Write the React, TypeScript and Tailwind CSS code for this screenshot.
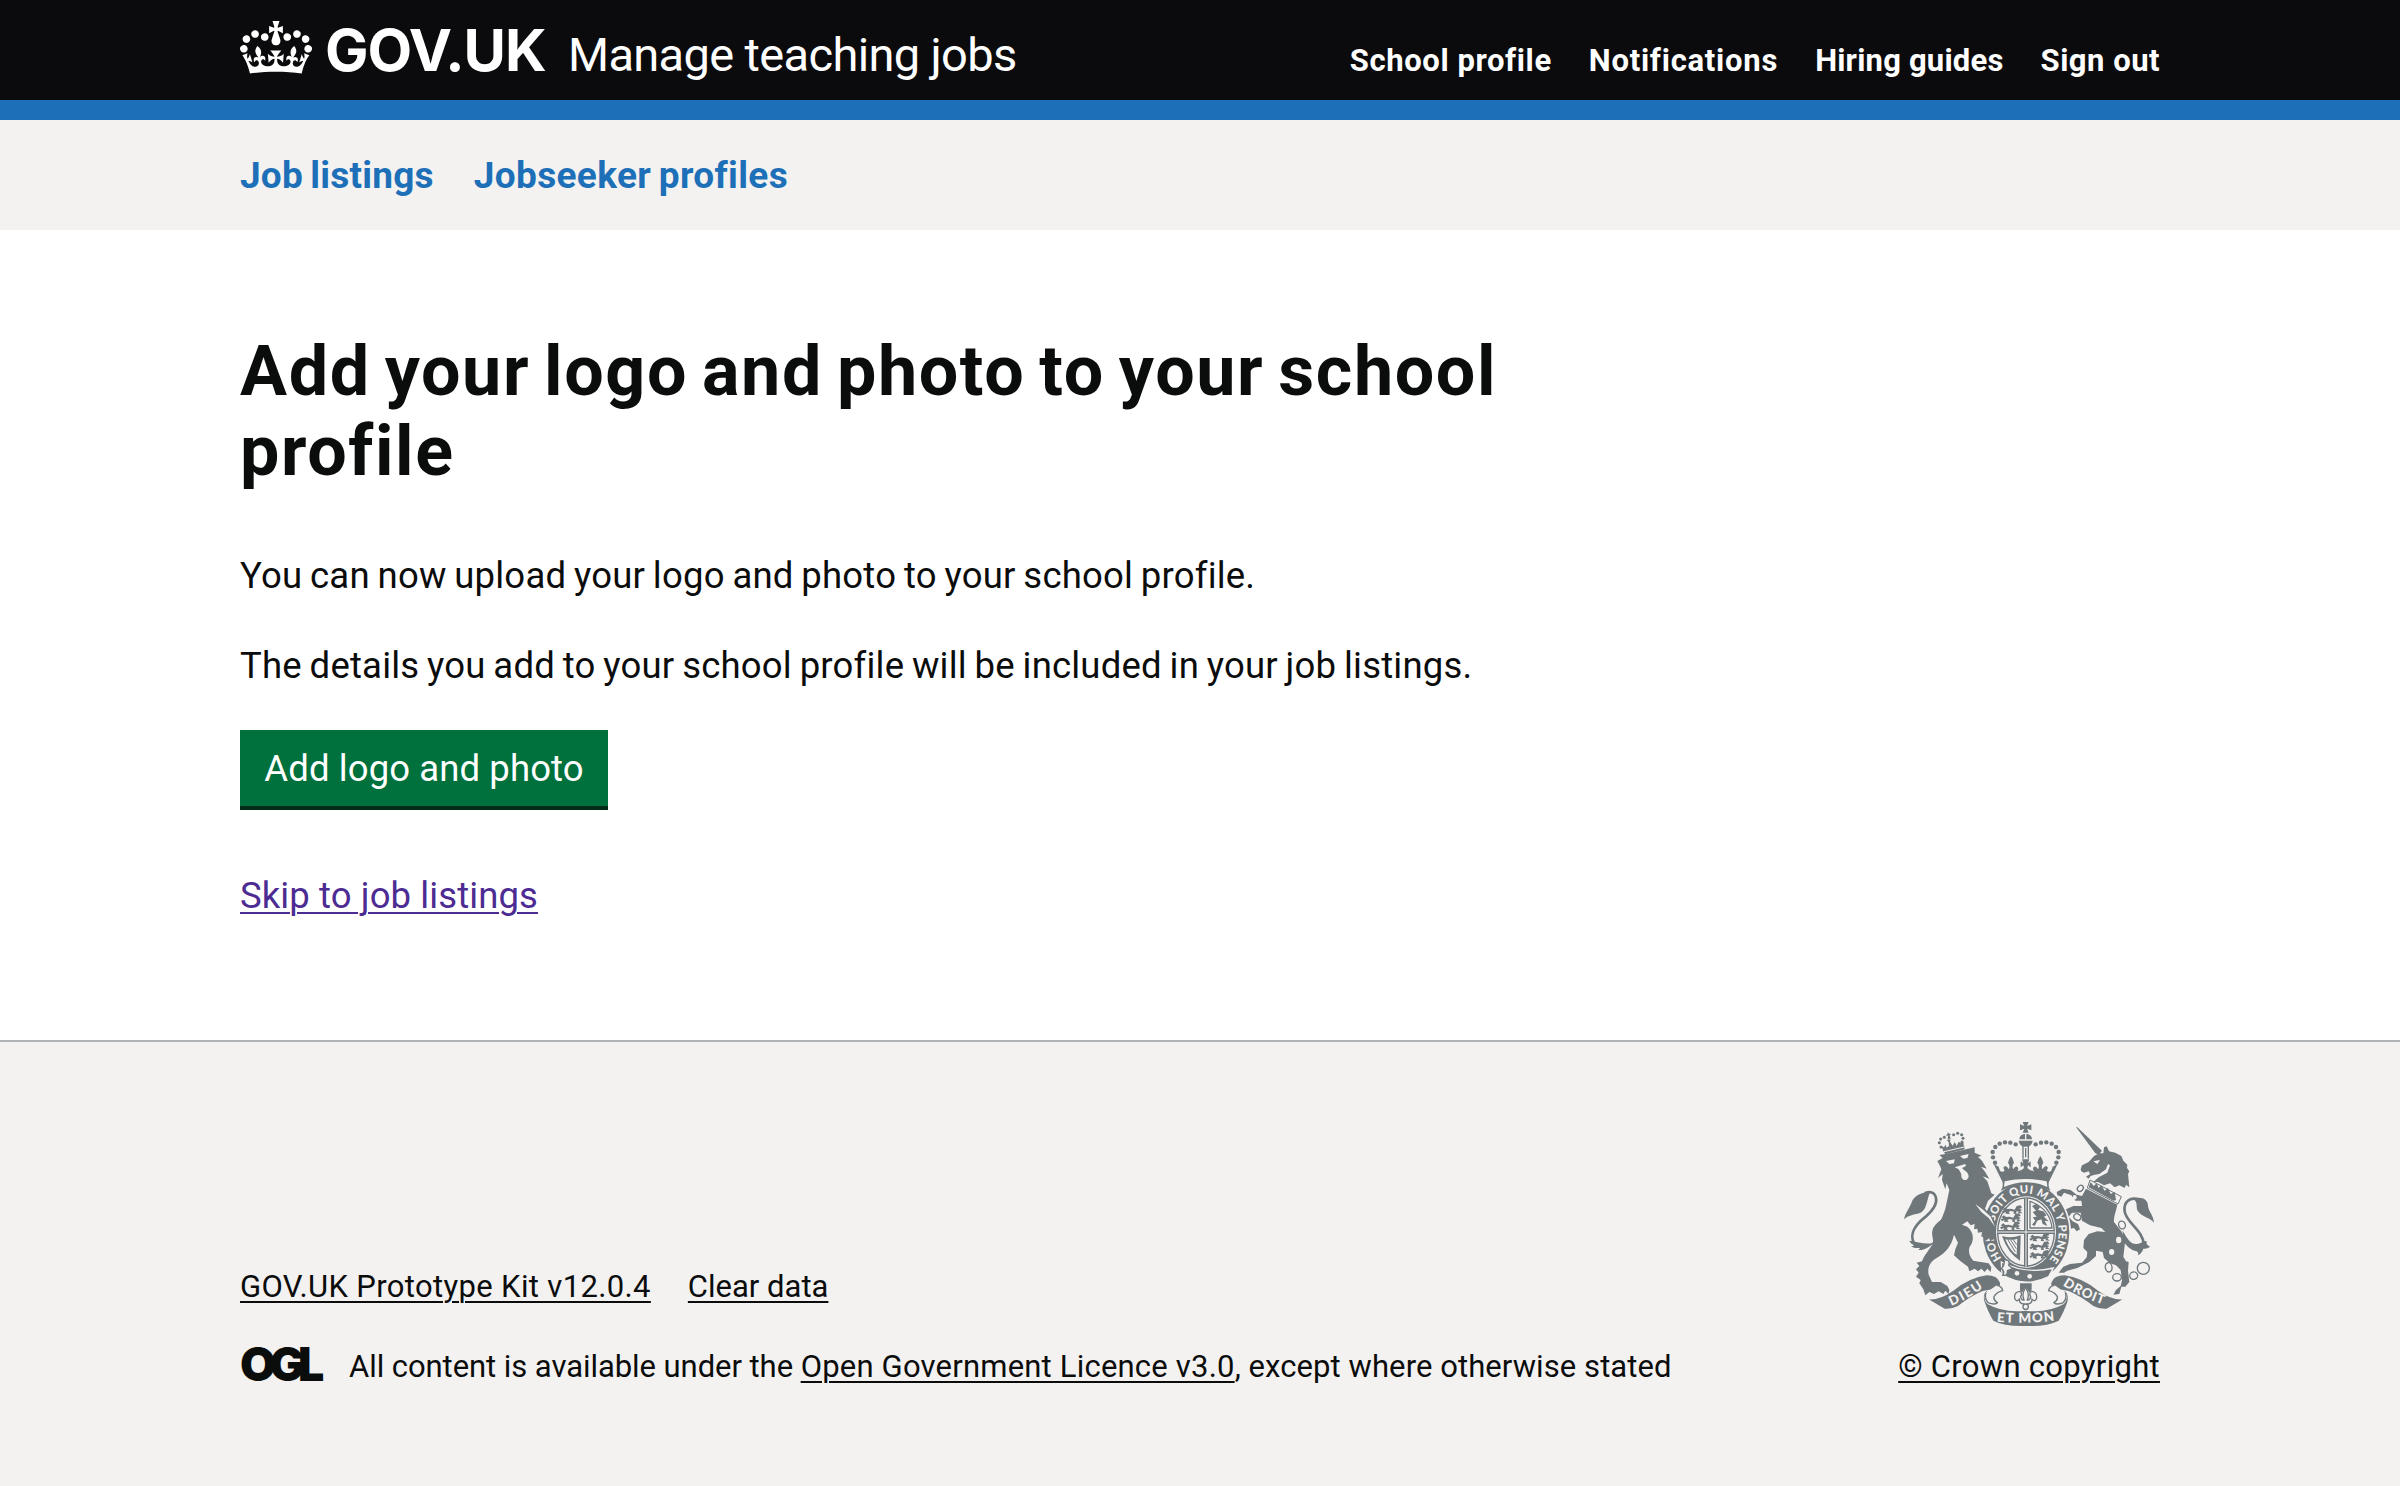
function Crown() {
  return (
    <svg viewBox="0 0 132 97" className="mt-[21px] h-[53px] w-[72px] fill-current" aria-hidden="true">
      <path d="M25 30.2c3.5 1.5 7.7-.2 9.1-3.7 1.5-3.6-.2-7.8-3.9-9.2-3.6-1.4-7.6.3-9.1 3.9-1.4 3.5.3 7.5 3.9 9zM9 39.5c3.6 1.5 7.8-.2 9.2-3.7 1.5-3.6-.2-7.8-3.9-9.1-3.6-1.5-7.6.2-9.1 3.8-1.4 3.5.3 7.5 3.8 9zM4.4 57.2c3.5 1.5 7.7-.2 9.1-3.8 1.5-3.6-.2-7.7-3.9-9.1-3.5-1.5-7.6.3-9.1 3.8-1.4 3.5.3 7.6 3.9 9.1zm38.3-21.4c3.5 1.5 7.7-.2 9.1-3.8 1.5-3.6-.2-7.7-3.9-9.1-3.6-1.5-7.6.3-9.1 3.8-1.3 3.6.4 7.7 3.9 9.1zm64.4-5.6c-3.6 1.5-7.8-.2-9.1-3.7-1.5-3.6.2-7.8 3.8-9.2 3.6-1.4 7.7.3 9.2 3.9 1.3 3.5-.4 7.5-3.9 9zm15.9 9.3c-3.6 1.5-7.7-.2-9.1-3.7-1.5-3.6.2-7.8 3.7-9.1 3.6-1.5 7.7.2 9.2 3.8 1.5 3.5-.3 7.5-3.8 9zm4.7 17.7c-3.6 1.5-7.8-.2-9.2-3.8-1.5-3.6.2-7.7 3.9-9.1 3.6-1.5 7.7.3 9.2 3.8 1.3 3.5-.4 7.6-3.9 9.1zM89.3 35.8c-3.6 1.5-7.8-.2-9.2-3.8-1.4-3.6.2-7.7 3.9-9.1 3.6-1.5 7.7.3 9.2 3.8 1.4 3.6-.3 7.7-3.9 9.1zM69.7 17.7l8.9 4.7V9.3l-8.9 2.8c-.2-.3-.5-.6-.9-.9L72.4 0H59.6l3.5 11.2c-.3.3-.6.5-.9.9l-8.8-2.8v13.1l8.8-4.7c.3.3.6.7.9.9l-5 15.4v.1c-.2.8-.4 1.6-.4 2.4 0 4.1 3.1 7.5 7 8.1h.2c.3 0 .7.1 1 .1.4 0 .7 0 1-.1h.2c4-.6 7.1-4.1 7.1-8.1 0-.8-.1-1.7-.4-2.4V34l-5.1-15.4c.4-.2.7-.6 1-.9zM66 92.8c16.9 0 32.8 1.1 47.1 3.2 4-16.9 8.9-26.7 14-33.5l-9.6-3.4c1 4.9 1.1 7.2 0 10.2-1.5-1.4-3-4.3-4.2-8.7L108.6 76c2.8-2 5-3.2 7.5-3.3-4.4 9.4-10 11.9-13.6 11.2-4.3-.8-6.3-4.6-5.6-7.9 1-4.7 5.7-5.9 8-.5 4.3-8.7-3-11.4-7.6-8.8 7.1-7.2 7.9-13.5 2.1-21.1-8 6.1-8.1 12.3-4.5 20.8-4.7-5.4-12.1-2.5-9.5 6.2 3.4-5.2 7.9-2 7.2 3.1-.6 4.3-6.4 7.8-13.5 7.2-10.3-.9-10.9-8-11.2-13.8 2.5-.5 7.1 1.8 11 7.3L80.2 60c-4.1 4.4-8 5.3-12.3 5.4 1.4-4.4 8-11.6 8-11.6H55.5s6.4 7.2 7.9 11.6c-4.2-.1-8-1-12.3-5.4l1.4 16.4c3.9-5.5 8.5-7.7 10.9-7.3-.3 5.8-.9 12.8-11.1 13.8-7.2.6-12.9-2.9-13.5-7.2-.7-5 3.8-8.3 7.1-3.1 2.7-8.7-4.6-11.6-9.4-6.2 3.7-8.5 3.6-14.7-4.6-20.8-5.8 7.6-5 13.9 2.2 21.1-4.7-2.6-11.9.1-7.7 8.8 2.3-5.5 7.1-4.2 8.1.5.7 3.3-1.3 7.1-5.7 7.9-3.5.7-9-1.8-13.5-11.2 2.5.1 4.7 1.3 7.5 3.3l-4.7-15.4c-1.2 4.4-2.7 7.2-4.3 8.7-1.1-3-.9-5.3 0-10.2l-9.5 3.4c5 6.9 9.9 16.7 14 33.5 14.8-2.1 30.8-3.2 47.7-3.2z" />
    </svg>
  )
}

const INK = '#6f777b'
const PAPER = '#f3f2f1'

// Pearls along the arches of the central crown.
const pearls: [number, number][] = [
  [345, 188], [339, 172], [338, 156], [346, 141], [359, 131], [375, 127], [391, 128], [407, 133],
  [467, 133], [483, 128], [499, 127], [515, 131], [528, 141], [536, 156], [535, 172], [529, 188],
]

// Pearls of the small crown worn by the lion.
const lionPearls: [number, number][] = [
  [183, 141], [178, 128], [182, 117], [193, 112], [221, 104], [233, 100], [245, 104], [249, 115], [246, 126],
]

// Oval links of the unicorn's chain: cx, cy, rx, ry, rotation.
const links: [number, number, number, number, number][] = [
  [601, 265, 10, 8, -45],
  [592, 351, 11, 9, 30],
  [726, 375, 10, 12, -20],
  [686, 502, 10, 14, -10],
  [711, 532, 13, 11, 0],
  [761, 527, 12, 11, -20],
  [790, 505, 18, 18, 0],
]

function Lion() {
  return (
    <g>
      {/* tail */}
      <path d="M108 440C86 410 96 382 137 350C162 328 172 312 168 294C164 274 148 274 134 280" fill="none" stroke={INK} strokeWidth="8" />
      <path d="M150 276C132 274 104 285 96 304C92 320 76 338 72 358C84 345 104 344 122 338C140 330 140 302 150 276Z" />
      <path d="M206 338C185 360 160 372 157 392C154 408 162 418 158 428C140 436 112 424 88 422C92 432 98 434 106 435C100 438 96 438 93 438C102 446 112 444 120 444C118 448 116 449 115 450C132 452 160 436 172 416Z" />
      {/* body, mane and legs */}
      <path d="M172 183L188 174L178 165L196 162L284 142L284 158L305 167L294 171L306 182L320 206L303 200L314 214L328 236L308 229L322 244L330 268L334 280L344 284L324 302L315 326L326 340L342 358L342 385L346 402L344 416L330 424L328 414L318 422L312 410L304 410L306 396L294 398L292 386L282 388L284 372L272 376L262 364L246 374L262 380C282 396 282 420 272 436C262 450 268 470 280 482L302 486L326 490L334 502L332 516L322 506L314 516L304 506L294 514L284 506L268 514L264 500L240 482L222 466L226 448L234 428L222 404C214 440 196 458 170 474C148 486 142 506 146 524L156 546L182 546L202 558L208 570L206 582L196 572L190 582L176 574L162 582L148 576L136 586L130 568L118 550L122 540L108 530L116 518L108 508L118 498L110 488L126 484C136 456 160 440 166 410C172 380 188 352 196 326L208 270L200 250L196 268L186 240L188 222L174 234L184 208L180 198Z" />
      {/* face and foreleg highlight */}
      <g fill={PAPER}>
        <path d="M198 183L224 178L222 190L208 192Z" />
        <path d="M240 168L266 162L262 174L250 176Z" />
        <path d="M224 202L256 192L258 198L246 204L252 210Q266 218 266 230Q262 242 252 240Q242 236 244 222L236 208Z" />
        <path d="M286 312L310 330L332 350L345 380L326 354L304 336Z" />
      </g>
      {/* crown */}
      <path d="M188 150L252 136L254 148L196 163Z" />
      <path d="M184 138L192 142L197 134L200 143L207 138L206 126L200 120L212 119L210 125L218 137L224 126L230 137L236 125L242 129L250 126L251 137L189 151Z" />
      <path d="M203 96L208 101L214 102L209 106L212 117L203 119L204 107L196 106L203 102Z" />
      {lionPearls.map(([x, y]) => (
        <circle key={`${x}-${y}`} cx={x} cy={y} r="4.6" />
      ))}
      <path d="M192 155L253 141" stroke={PAPER} strokeWidth="3" />
    </g>
  )
}

function Unicorn() {
  return (
    <g>
      {/* tail */}
      <path d="M780 300C750 288 730 306 734 334C738 368 790 390 792 436" fill="none" stroke={INK} strokeWidth="8" />
      <path d="M760 296C786 288 804 298 804 318C806 336 820 344 822 368C808 352 784 350 774 334C766 320 776 310 760 296Z" />
      <path d="M728 392C742 416 752 432 768 432C782 434 790 420 800 424C798 434 804 436 810 440C802 446 796 446 790 446C788 454 782 462 774 466C776 460 774 456 770 454C752 452 738 436 728 420Z" />
      {/* horn and head */}
      <path d="M588 81L592 82L666 152L656 164L646 160Z" />
      <path d="M602 208L606 196L626 186L642 168L658 160L670 160L672 142L680 139L687 154L706 158L724 168L730 182L742 194L741 204L748 214L744 222L748 262L738 254L734 264L718 256L704 262L690 250L672 256L654 246L640 246L656 232L682 218L690 196L684 192L678 208L658 222L644 224L632 228L626 236L618 230L630 222L626 214L612 218L604 214Z" />
      <path d="M640 184L660 180L652 192Z" fill={PAPER} />
      {/* coronet round the neck */}
      <path d="M630 240L724 290L714 312L622 264Z" fill={PAPER} stroke={INK} strokeWidth="3" />
      <path d="M626 262L632 246L641 258L650 250L656 264L664 256L674 272L684 264L692 282L704 276L708 300L700 302Z" />
      {/* body and legs */}
      <path d="M618 266L712 314C708 336 700 350 702 366L724 394L736 420L730 470L738 484L746 486L744 512L748 546L736 560L724 560L718 582L700 584L708 570L722 558L726 542L722 510L708 496L690 490L672 474L668 456L648 452L648 468L628 486L592 504L562 512L552 518L536 518L550 500L570 492L606 488L620 472L622 456L610 444L612 420L626 402L652 394L676 396L664 384L630 376L606 362L602 338L576 338L566 350L578 364L594 372L600 388L590 394L582 384L572 386L560 374L554 354L548 340L558 328L580 318L606 318L604 302L586 302L574 286L552 278L544 290L532 286L530 276L548 266L572 270L590 284L606 288Z" />
      {/* chain */}
      {links.map(([cx, cy, rx, ry, a]) => (
        <ellipse key={`${cx}-${cy}`} cx={cx} cy={cy} rx={rx} ry={ry} transform={`rotate(${a} ${cx} ${cy})`} fill={PAPER} stroke={INK} strokeWidth="4" />
      ))}
      <g fill={PAPER}>
        <ellipse cx="716" cy="420" rx="8" ry="10" />
        <ellipse cx="695" cy="456" rx="8" ry="9" />
        <ellipse cx="584" cy="292" rx="6" ry="7" />
      </g>
    </g>
  )
}

function CentralCrown() {
  return (
    <g>
      {pearls.map(([x, y]) => (
        <circle key={`${x}-${y}`} cx={x} cy={y} r="6.6" />
      ))}
      <path d="M428 66H446L441 78L454 73V91L441 86L446 98H428L433 86L420 91V73L433 78Z" />
      <path d="M418 118A19 17 0 0 1 456 118Z" />
      <path d="M435 100H439V118H435Z" fill={PAPER} />
      <path d="M416 122H458Q456 140 437 140Q418 140 416 122Z" />
      <path d="M429 138V176M445 138V176" stroke={INK} strokeWidth="4" />
      <path d="M435 144H439V172H435Z" />
      <path d="M341 192L356 200L360 212Q366 218 374 212Q366 200 376 198Q384 200 386 208Q392 198 384 188Q388 174 393 168Q398 174 402 188Q394 198 400 208Q404 198 412 200Q418 206 412 214Q426 212 432 204L430 196L422 202V184L430 190L426 178H448L444 190L452 184V202L444 196L442 204Q448 212 462 214Q456 206 462 200Q470 198 474 208Q480 198 472 188Q476 174 481 168Q486 174 490 188Q482 198 488 208Q490 200 498 198Q508 200 500 212Q508 218 514 212L518 200L533 192L508 243Q437 228 366 243Z" />
      <path d="M366 240Q372 262 362 272Q437 236 512 272Q502 262 508 240Q437 226 366 240Z" />
      <path d="M374 244Q437 230 500 244L502 261Q437 232 372 261Z" fill={PAPER} />
    </g>
  )
}

function Shield() {
  return (
    <g>
      {/* garter with its motto */}
      <ellipse cx="438" cy="397" rx="135" ry="152" fill={PAPER} />
      <ellipse cx="438" cy="397" rx="130" ry="148" />
      <ellipse cx="438" cy="396" rx="90" ry="107" fill={PAPER} />
      <defs>
        <path id="garter" d="M365 475A98 117 0 1 1 494 493" />
        <path id="ribbon-left" d="M214 618Q262 598 312 562" />
        <path id="ribbon-right" d="M548 556Q600 590 674 616" />
        <path id="ribbon-base" d="M350 665Q437 673 526 662" />
      </defs>
      <text className="font-['Lato'] font-black" fill={PAPER} fontSize="34">
        <textPath href="#garter" textLength="510">{'HONI\u00a0\u00a0SOIT QUI MAL Y PENSE'}</textPath>
      </text>
      {/* quartered shield */}
      <ellipse cx="438" cy="396" rx="85" ry="102" fill={PAPER} stroke={INK} strokeWidth="4" />
      <path d="M352 396H524M438 296V500" stroke={INK} strokeWidth="12" />
      <path d="M352 396H524M438 296V500" stroke={PAPER} strokeWidth="3" />
      {/* lions passant */}
      {[[366, 322], [362, 346], [360, 370], [448, 404], [448, 430], [448, 456]].map(([x, y]) => (
        <path
          key={`${x}-${y}`}
          transform={`translate(${x} ${y})`}
          d="M2 6L10 0L16 5L26 4L38 7L44 -4L56 -6L60 2L52 4L60 8L54 12L62 18L48 17L50 12L42 13L44 20L34 19L36 13L26 11L20 14L24 20L10 19L12 13L4 18L0 12L8 9Z"
        />
      ))}
      {/* lion rampant in its tressure */}
      <path d="M450 304V384H516Q510 326 450 304Z" fill="none" stroke={INK} strokeWidth="4" />
      <path d="M456 318L468 312L480 322L474 330L490 334L500 346L492 350L506 364L494 362L502 378L488 372L484 358L472 362L464 378L456 374L466 362L458 352L470 350L458 336L468 332Z" />
      {/* harp */}
      <path d="M366 408Q394 416 422 406L420 482Q384 460 366 408ZM376 418Q392 456 410 464L412 416Q394 422 376 418Z" fillRule="evenodd" />
      <path d="M384 420L406 456M392 420L409 446M400 419L410 434" stroke={INK} strokeWidth="3" />
      {/* buckle and strap end */}
      <path d="M364 486Q436 524 520 504L506 530Q436 566 366 524Z" fill={INK} stroke={PAPER} strokeWidth="4" />
      <path d="M372 480Q392 478 386 496L398 506L382 512Q384 528 368 526Q376 514 364 506Q376 494 372 480Z" fill={PAPER} stroke={INK} strokeWidth="4" />
      <circle cx="411" cy="520" r="7" fill={PAPER} />
      <circle cx="449" cy="529" r="7" fill={PAPER} />
    </g>
  )
}

function Ribbon() {
  return (
    <g>
      {/* plant badge */}
      <path d="M420 550H455V570L448 578L437 560L426 578L420 570Z" />
      <path d="M437 562Q450 582 442 600Q450 602 452 590Q446 580 454 574Q472 576 470 594Q466 608 456 598Q456 612 442 612V622H432V612Q418 612 418 598Q408 608 404 594Q402 576 420 574Q428 580 422 590Q424 602 432 600Q424 582 437 562Z" fill={PAPER} stroke={INK} strokeWidth="4" />
      <circle cx="437" cy="620" r="8" fill={PAPER} stroke={INK} strokeWidth="4" />
      {/* scroll */}
      <path d="M146 598Q180 600 220 572Q270 532 320 526Q352 526 360 548Q362 560 350 570Q330 566 306 574Q270 590 234 618Q214 628 194 626Z" />
      <path d="M728 598Q694 600 654 572Q604 532 554 526Q522 526 514 548Q512 560 524 570Q544 566 568 574Q604 590 640 618Q660 628 680 626Z" />
      <path d="M324 570Q304 590 322 612Q372 640 437 632Q502 640 552 612Q570 590 550 570Q568 580 562 606Q550 640 536 662Q500 680 437 678Q374 680 340 662Q326 640 314 606Q306 580 324 570Z" />
      <path d="M318 578Q312 594 324 608Q344 616 352 608Q340 600 342 590Q350 576 368 572Q366 558 350 556M556 578Q562 594 550 608Q530 616 522 608Q534 600 532 590Q524 576 506 572Q508 558 524 556" fill={PAPER} stroke={INK} strokeWidth="4" />
      <g className="font-['Lato'] font-black" fill={PAPER} fontSize="40">
        <text><textPath href="#ribbon-left" textLength="110">DIEU</textPath></text>
        <text><textPath href="#ribbon-base" textLength="174">ET MON</textPath></text>
        <text><textPath href="#ribbon-right" textLength="134">DROIT</textPath></text>
      </g>
    </g>
  )
}

function CoatOfArms() {
  return (
    <svg viewBox="72 66 750 612" width="250" height="204" fill={INK} className="overflow-visible" aria-hidden="true">
      <Unicorn />
      <Shield />
      <Lion />
      <CentralCrown />
      <Ribbon />
    </svg>
  )
}

const link = 'underline decoration-2 underline-offset-4'

export default function App() {
  return (
    <div className="flex min-h-[1486px] flex-col bg-white font-['Roboto',sans-serif] text-[#0b0c0c]">
      <header className="bg-[#0b0b0d] text-white">
        <div className="mx-auto flex h-[100px] w-[1920px] items-start">
          <a className="flex items-start">
            <Crown />
            <span className="mt-5 ml-[13px] w-[244px] font-['Inter'] text-[58px] leading-[60px] font-bold tracking-[-1.1px]">GOV.UK</span>
          </a>
          <a className="mt-[25px] -ml-px text-[47px] leading-[60px] tracking-[-0.65px] whitespace-nowrap">Manage teaching jobs</a>
          <nav className="mt-[41px] ml-auto flex gap-[37px] text-[31px] leading-10 font-bold whitespace-nowrap">
            <a className="tracking-[0.6px]">School profile</a>
            <a className="tracking-[0.75px]">Notifications</a>
            <a className="tracking-[0.2px]">Hiring guides</a>
            <a className="tracking-[0.5px]">Sign out</a>
          </nav>
        </div>
      </header>
      <div className="h-5 bg-[#1d70b8]" />
      <div className="h-[110px] bg-[#f3f2f1]">
        <nav className="mx-auto flex w-[1920px] gap-10 pt-9 text-[37px] leading-10 font-bold text-[#1d70b8]">
          <a className="tracking-[0.2px] [word-spacing:-2px]">Job listings</a>
          <a className="tracking-[0.35px] [word-spacing:-2px]">Jobseeker profiles</a>
        </nav>
      </div>

      <main className="mx-auto h-[810px] w-[1920px] pt-[101px]">
        <h1 className="w-[1280px] text-[70px] leading-[80px] font-bold tracking-[1.6px] [word-spacing:-5px]">
          Add your logo and photo to your school profile
        </h1>
        <div className="mt-[60px] flex flex-col items-start text-[36.5px] leading-[50px]">
          <p className="tracking-[0.2px] [word-spacing:-1.5px]">You can now upload your logo and photo to your school profile.</p>
          <p className="mt-10 tracking-[0.2px] [word-spacing:-1.5px]">
            The details you add to your school profile will be included in your job listings.
          </p>
          <button className="mt-[39px] h-20 w-[368px] border-b-4 border-[#002d18] bg-[#00703c] pt-0.5 tracking-[0.1px] text-white">Add logo and photo</button>
          <a className="mt-[61px] tracking-[0.1px] text-[#4c2c92] underline decoration-2 underline-offset-4">Skip to job listings</a>
        </div>
      </main>

      <footer className="flex-1 border-t-2 border-[#b1b4b6] bg-[#f3f2f1] text-[31px] leading-10">
        <div className="mx-auto flex w-[1920px] items-end justify-between pt-20">
          <div>
            <div className="flex gap-[37px]">
              <a className={`${link} tracking-[0.35px]`}>GOV.UK Prototype Kit v12.0.4</a>
              <a className={link}>Clear data</a>
            </div>
            <div className="mt-10 flex whitespace-pre">
              <span className="-mt-[3px] w-[109px] font-['Inter'] text-[46.5px] font-black tracking-[-6.6px]">OGL</span>
              <span className="tracking-[-0.06px]">All content is available under the </span>
              <a className={`${link} tracking-[0.2px]`}>Open Government Licence v3.0</a>
              <span className="tracking-[0.08px]">, except where otherwise stated</span>
            </div>
          </div>
          <div className="flex flex-col items-end">
            <div className="mr-1.5">
              <CoatOfArms />
            </div>
            <a className={`${link} mt-[21px] tracking-[0.3px]`}>© Crown copyright</a>
          </div>
        </div>
      </footer>
    </div>
  )
}
